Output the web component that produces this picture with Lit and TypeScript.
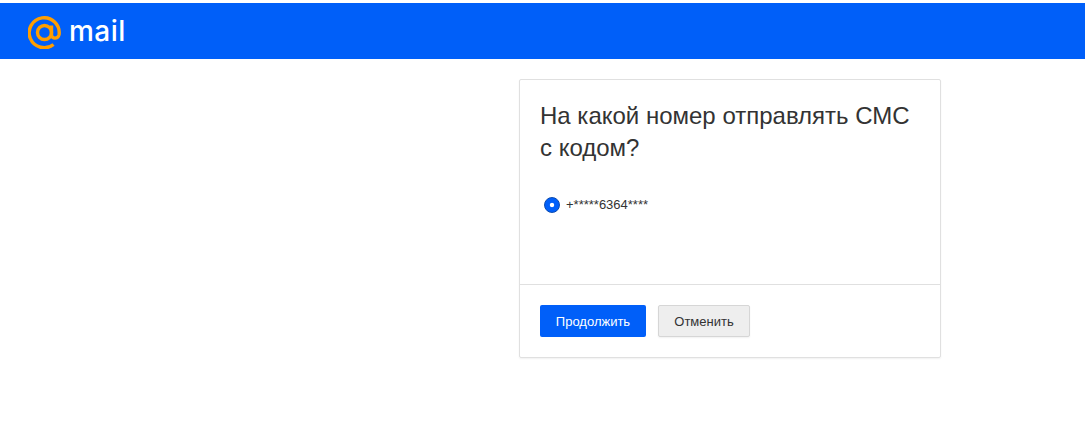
import { LitElement, html, css } from "lit";
import { customElement } from "lit/decorators.js";

@customElement("app-root")
export class AppRoot extends LitElement {
  static styles = css`
    :host {
      display: block;
      min-height: 444px;
      background: #ffffff;
      font-family: "Liberation Sans", Arial, sans-serif;
      color: #333333;
    }

    .page {
      display: flow-root;
    }

    .top {
      height: 56px;
      margin-top: 3px;
      padding-left: 28px;
      display: flex;
      align-items: center;
      gap: 8px;
      background: #005ff9;
    }

    .logo-at {
      display: block;
      width: 33px;
      height: 33px;
      margin-top: 3px;
    }

    .logo-text {
      font-family: Inter, "Noto Sans", sans-serif;
      font-size: 28px;
      line-height: 36px;
      font-weight: 500;
      letter-spacing: 0.5px;
      color: #ffffff;
    }

    .main {
      padding: 20px 0 0 519px;
    }

    .card {
      box-sizing: border-box;
      width: 422px;
      height: 279px;
      display: flex;
      flex-direction: column;
      border: 1px solid #e0e0e0;
      border-radius: 2px;
      box-shadow: 0 1px 2px rgba(0, 0, 0, 0.06);
    }

    .body {
      flex: 1;
      padding: 20px 20px 0;
    }

    h1 {
      margin: 0;
      font-size: 24px;
      line-height: 32px;
      font-weight: 400;
    }

    .option {
      display: flex;
      align-items: center;
      gap: 6px;
      margin: 33px 0 0 4px;
      font-size: 13px;
      line-height: 16px;
    }

    .radio {
      box-sizing: border-box;
      width: 16px;
      height: 16px;
      border: 1px solid #0a49b0;
      border-radius: 50%;
      background: radial-gradient(circle, #ffffff 1.8px, #005ff9 2.6px);
    }

    .actions {
      height: 73px;
      box-sizing: border-box;
      display: flex;
      gap: 12px;
      padding: 20px 20px 0;
      border-top: 1px solid #e0e0e0;
    }

    button {
      box-sizing: border-box;
      height: 32px;
      padding: 0;
      font-family: inherit;
      font-size: 13px;
      border-radius: 2px;
    }

    .primary {
      width: 106px;
      border: none;
      background: #005ff9;
      color: #ffffff;
    }

    .secondary {
      width: 92px;
      border: 1px solid #d6d6d6;
      background: #eeeeee;
      color: #333333;
      box-shadow: 0 1px 2px rgba(0, 0, 0, 0.06);
    }
  `;

  render() {
    return html`
      <div class="page">
        <header class="top">
          <svg class="logo-at" viewBox="0 0 33 33" fill="none" stroke="#ff9e00" stroke-width="3.4" aria-hidden="true">
            <circle cx="16.5" cy="16.5" r="7"></circle>
            <path d="M23.5 9.500V19c0 4 6.500 4.500 7.600-.5A15 15 0 1 0 25.500 28.500"></path>
          </svg>
          <span class="logo-text">mail</span>
        </header>
        <main class="main">
          <section class="card">
            <div class="body">
              <h1>На какой номер отправлять СМС с кодом?</h1>
              <label class="option">
                <span class="radio"></span>
                +*****6364****
              </label>
            </div>
            <footer class="actions">
              <button class="primary">Продолжить</button>
              <button class="secondary">Отменить</button>
            </footer>
          </section>
        </main>
      </div>
    `;
  }
}
